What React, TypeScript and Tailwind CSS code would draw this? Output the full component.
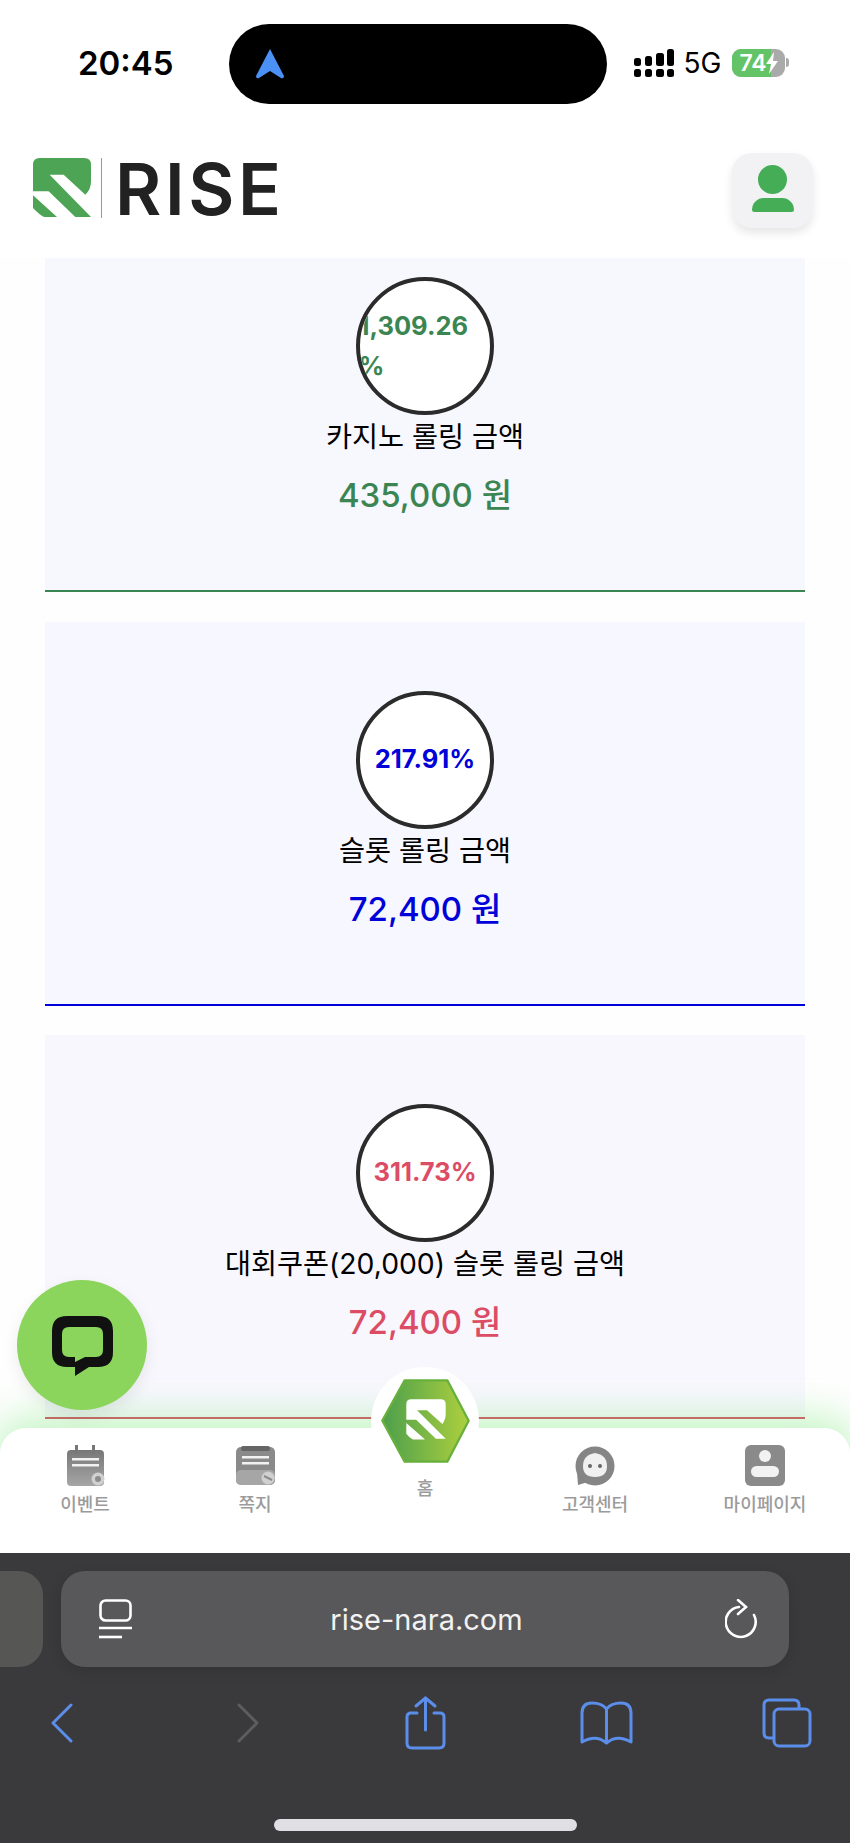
import React from 'react';

const cards = [
  { percent: '1,309.26%', label: '카지노 롤링 금액', amount: '435,000 원', text: 'text-[#3b8552]', line: 'border-[#3b8552]', bg: 'bg-[#f7f7fe]' },
  { percent: '217.91%', label: '슬롯 롤링 금액', amount: '72,400 원', text: 'text-[#0000d8]', line: 'border-[#0000d8]', bg: 'bg-[#f7f7ff]' },
  { percent: '311.73%', label: '대회쿠폰(20,000) 슬롯 롤링 금액', amount: '72,400 원', text: 'text-[#dc4c64]', line: 'border-[#dc4c64]', bg: 'bg-[#f9f7fe]' },
];

const StatusBar = () => (
  <div className="relative flex h-[120px] shrink-0 items-start bg-white">
    <span className="ml-[78px] mt-[43px] text-[33px] font-semibold leading-[40px] text-black">20:45</span>
    <div className="ml-[55px] mt-[24px] flex h-[80px] w-[378px] items-center rounded-[40px] bg-black pl-[27px]">
      <svg width="28" height="30" viewBox="0 0 28 30">
        <path d="M14 0 L28 27 Q28 30 25 29 L14 22 L3 29 Q0 30 0 27 Z" fill="#4a90f5" />
      </svg>
    </div>
    <svg className="ml-[27px] mt-[49px]" width="40" height="28" viewBox="0 0 40 28" fill="#000">
      <rect x="0" y="20" width="7" height="8" rx="2.5" />
      <rect x="11" y="20" width="7" height="8" rx="2.5" />
      <rect x="22" y="20" width="8" height="8" rx="2.5" />
      <rect x="33" y="20" width="7" height="8" rx="2.5" />
      <rect x="0" y="9" width="7" height="8" rx="2.5" />
      <rect x="11" y="7" width="7" height="10" rx="2.5" />
      <rect x="22" y="4" width="8" height="13" rx="2.5" />
      <rect x="33" y="0" width="7" height="17" rx="2.5" />
    </svg>
    <span className="ml-[10px] mt-[47px] text-[28px] font-normal leading-[32px] text-black">5G</span>
    <div className="relative ml-[10px] mt-[49px] flex h-[28px] w-[53px] items-center overflow-hidden rounded-[9px] bg-[#aaaaaa]">
      <div className="flex h-full w-[39px] items-center justify-center bg-[#62c466] pl-[4px] text-[23px] font-semibold leading-none text-white">74</div>
      <svg className="absolute left-[33px] top-[3px]" width="14" height="22" viewBox="0 0 14 22">
        <path d="M9 0 L1 12 H6 L4 22 L13 9 H8 Z" fill="#fff" />
      </svg>
    </div>
    <div className="ml-[1px] mt-[58px] h-[9px] w-[3px] rounded-r-full bg-[#aaaaaa]" />
  </div>
);

const Header = () => (
  <header className="flex h-[138px] shrink-0 items-start justify-between bg-white pl-[33px] pr-[37px]">
    <div className="mt-[38px] flex h-[60px] items-center">
      <svg width="58" height="60" viewBox="38 55 174 180">
        <path d="M38 155 V75 Q38 55 58 55 H192 Q212 55 212 75 V125 Q212 150 195 165 L130 105 H88 L212 232 H165 L85 155 Z" fill="#4ea455" />
        <path d="M38 167 L110 232 H72 Q60 228 38 205 Z" fill="#4ea455" />
      </svg>
      <div className="ml-[10px] h-[60px] w-px bg-[#999999]" />
      <span className="ml-[13px] mt-[2px] text-[71px] font-semibold leading-none tracking-[3.6px] text-[#222222]">RISE</span>
    </div>
    <button type="button" className="mt-[33px] flex h-[75px] w-[81px] flex-col items-center rounded-[20px] bg-[#f2f2f4] pt-[12px] shadow-[0_5px_10px_rgba(0,0,0,0.1)]">
      <span className="h-[29px] w-[29px] rounded-full bg-[#45ad55]" />
      <span className="mt-[4px] h-[14px] w-[42px] rounded-t-[21px] rounded-b-[4px] bg-[#45ad55]" />
    </button>
  </header>
);

const StatCard = ({ card }: { card: (typeof cards)[number] }) => (
  <section className={`flex h-[384px] flex-col items-center border-b-2 pt-[69px] ${card.bg} ${card.line}`}>
    <div className="flex h-[138px] w-[138px] shrink-0 items-center justify-center overflow-hidden rounded-full border-[4px] border-[#2b2b2b] bg-white">
      {card.percent.length > 8 ? (
        <span className={`-ml-[9px] w-[124px] shrink-0 text-left text-[25.5px] font-bold leading-[40px] ${card.text}`}>
          {card.percent.replace('%', '')}
          <br />%
        </span>
      ) : (
        <span className={`-mt-[2px] text-[25.5px] font-bold leading-[40px] ${card.text}`}>{card.percent}</span>
      )}
    </div>
    <p className="mt-[4px] text-[28.3px] leading-[36px] text-black">{card.label}</p>
    <p className={`mt-[20px] text-[33px] font-medium leading-[40px] ${card.text}`}>{card.amount}</p>
  </section>
);

const EventIcon = () => (
  <svg width="39" height="41" viewBox="0 0 39 41">
    <defs>
      <linearGradient id="g1" x1="0" y1="0" x2="0" y2="1">
        <stop offset="0" stopColor="#777777" />
        <stop offset="1" stopColor="#a6a6a6" />
      </linearGradient>
    </defs>
    <rect x="1" y="5" width="37" height="36" rx="4" fill="url(#g1)" />
    <rect x="9" y="0" width="3" height="9" fill="#777" />
    <rect x="26" y="0" width="3" height="9" fill="#777" />
    <rect x="6" y="13" width="27" height="2.5" fill="#f2f2f2" />
    <rect x="6" y="19" width="27" height="2.5" fill="#f2f2f2" />
    <circle cx="32" cy="34" r="6.5" fill="#d0d0d0" />
    <circle cx="32" cy="34" r="3" fill="#8c8c8c" />
  </svg>
);

const NoteIcon = () => (
  <svg width="39" height="39" viewBox="0 0 39 39">
    <rect x="0" y="1" width="39" height="38" rx="5" fill="#8a8a8a" />
    <rect x="0" y="24" width="39" height="15" rx="5" fill="#a6a6a6" />
    <rect x="5" y="0" width="29" height="5" rx="2" fill="#666666" />
    <rect x="6" y="10" width="27" height="2.5" fill="#f2f2f2" />
    <rect x="6" y="16" width="27" height="2.5" fill="#f2f2f2" />
    <circle cx="32" cy="32" r="6.5" fill="#d0d0d0" />
    <path d="M28 30 L36 34" stroke="#8c8c8c" strokeWidth="2" />
  </svg>
);

const SupportIcon = () => (
  <svg width="40" height="40" viewBox="0 0 40 40">
    <circle cx="20" cy="20" r="19.5" fill="#858585" />
    <path d="M2 26 L3 39 L13 36 Z" fill="#858585" />
    <path d="M20 7 Q32 9 32 20 Q32 31 20 31 Q8 31 8 20 Q8 9 20 7 Z" fill="#f0f0f0" />
    <circle cx="15" cy="20" r="2" fill="#666" />
    <circle cx="25" cy="20" r="2" fill="#666" />
  </svg>
);

const MyPageIcon = () => (
  <svg width="40" height="41" viewBox="0 0 40 41">
    <rect x="0" y="0" width="40" height="41" rx="6" fill="#8a8a8a" />
    <circle cx="20" cy="11" r="6" fill="#f2f2f2" />
    <rect x="6" y="21" width="28" height="11" rx="5.5" fill="#f2f2f2" />
  </svg>
);

const HomeLogo = () => (
  <svg width="89" height="84" viewBox="88 88 271 256">
    <defs>
      <linearGradient id="hex" x1="0" y1="0" x2="1" y2="0">
        <stop offset="0" stopColor="#4c9f4c" />
        <stop offset="1" stopColor="#aed03e" />
      </linearGradient>
    </defs>
    <path d="M92 215 L160 92 H290 L355 215 L290 340 H160 Z" fill="url(#hex)" stroke="#67b03c" strokeWidth="7" strokeLinejoin="round" />
    <path d="M165 212 V165 Q165 150 180 150 H270 Q285 150 285 165 V195 Q285 212 275 225 L228 183 H198 L285 270 H255 L195 212 Z" fill="#fff" />
    <path d="M165 222 L222 272 H185 Q172 265 165 255 Z" fill="#fff" />
  </svg>
);

const navItems = [
  { label: '이벤트', icon: <EventIcon /> },
  { label: '쪽지', icon: <NoteIcon /> },
  { label: '홈', icon: null },
  { label: '고객센터', icon: <SupportIcon /> },
  { label: '마이페이지', icon: <MyPageIcon /> },
];

const BottomNav = () => (
  <nav className="absolute inset-x-0 bottom-0 grid h-[125px] grid-cols-5 rounded-t-[26px] bg-white shadow-[0_-6px_40px_4px_rgba(110,230,110,0.42)]">
    {navItems.map((item) =>
      item.icon ? (
        <div key={item.label} className="flex flex-col items-center pt-[17px]">
          <div className="flex h-[41px] items-center justify-center blur-[0.6px]">{item.icon}</div>
          <span className="mt-[7px] text-[18px] font-medium leading-[24px] text-[#9b9b9b]">{item.label}</span>
        </div>
      ) : (
        <div key={item.label} className="relative flex flex-col items-center pt-[49px]">
          <div className="absolute -top-[61px] left-1/2 flex h-[108px] w-[108px] -translate-x-1/2 items-center justify-center rounded-full bg-white">
            <HomeLogo />
          </div>
          <span className="text-[18px] font-medium leading-[24px] text-[#9b9b9b]">{item.label}</span>
        </div>
      ),
    )}
  </nav>
);

const ChatButton = () => (
  <button type="button" className="absolute bottom-[143px] left-[17px] h-[130px] w-[130px] rounded-full bg-[#8bd55c] shadow-[0_6px_16px_rgba(0,0,0,0.08)]">
    <svg width="130" height="130" viewBox="0 0 130 130">
      <path fillRule="evenodd" fill="#111" d="M50 36 H81 Q96 36 96 51 V72 Q96 87 81 87 H72 L58 96 V87 H50 Q35 87 35 72 V51 Q35 36 50 36 Z M52 47 Q45 47 45 54 V70 Q45 77 52 77 H58 V82 L68 77 H79 Q86 77 86 70 V54 Q86 47 79 47 Z" />
    </svg>
  </button>
);

const BrowserChrome = () => (
  <div className="flex h-[290px] shrink-0 flex-col bg-[#3a3a3c]">
    <div className="mt-[18px] flex h-[96px] items-stretch gap-[18px]">
      <div className="w-[43px] rounded-r-[24px] bg-[#565654]" />
      <div className="flex w-[728px] items-center justify-between rounded-[24px] bg-[#58585a] pl-[38px] pr-[30px] shadow-[0_4px_14px_rgba(0,0,0,0.12)]">
        <svg width="33" height="40" viewBox="0 0 33 40" fill="none" stroke="#fff" strokeWidth="2.6">
          <rect x="1.5" y="1.5" width="30" height="20" rx="5" />
          <path d="M0 29 H33" />
          <path d="M0 38 H23" />
        </svg>
        <span className="mr-[4px] text-[29px] leading-none text-[#f2f2f2]">rise-nara.com</span>
        <svg width="34" height="40" viewBox="0 0 34 40" fill="none" stroke="#fff" strokeWidth="2.6" strokeLinecap="round">
          <path d="M14 8 A15 15 0 1 0 29 16" />
          <path d="M13 1 L21 8 L13 15" />
        </svg>
      </div>
    </div>
    <div className="relative mt-[28px] h-[56px]">
      <div className="flex h-full items-center">
        <svg className="ml-[50px]" width="24" height="40" viewBox="0 0 24 40" fill="none" stroke="#5b8dea" strokeWidth="3" strokeLinecap="round" strokeLinejoin="round">
          <path d="M21 2 L3 20 L21 38" />
        </svg>
        <svg className="ml-[162px]" width="24" height="40" viewBox="0 0 24 40" fill="none" stroke="#5d5d60" strokeWidth="3" strokeLinecap="round" strokeLinejoin="round">
          <path d="M3 2 L21 20 L3 38" />
        </svg>
        <svg className="ml-[145px]" width="41" height="54" viewBox="0 0 41 54" fill="none" stroke="#5b8dea" strokeWidth="3" strokeLinecap="round" strokeLinejoin="round">
          <path d="M12 17 H6 Q2 17 2 21 V47 Q2 52 7 52 H34 Q39 52 39 47 V21 Q39 17 35 17 H29" />
          <path d="M20.5 34 V2" />
          <path d="M11 10 L20.5 2 L30 10" />
        </svg>
        <svg className="ml-[134px]" width="53" height="44" viewBox="0 0 53 44" fill="none" stroke="#5b8dea" strokeWidth="3" strokeLinejoin="round">
          <path d="M26.5 8 Q22 2 12 2 Q2 2 2 12 V41 Q16 33 26.5 42 Q37 33 51 41 V12 Q51 2 41 2 Q31 2 26.5 8 Z" />
          <path d="M26.5 8 V42" />
        </svg>
        <svg className="ml-[129px]" width="50" height="50" viewBox="0 0 50 50" fill="none" stroke="#5b8dea" strokeWidth="3" strokeLinejoin="round">
          <path d="M12 40 H7 Q2 40 2 35 V7 Q2 2 7 2 H32 Q37 2 37 7 V11" />
          <rect x="12" y="11" width="36" height="37" rx="5" />
        </svg>
      </div>
    </div>
    <div className="mx-auto mt-[68px] h-[12px] w-[303px] rounded-full bg-[#e0e0e4]" />
  </div>
);

export default function App() {
  return (
    <div className="flex h-[1843px] w-[850px] flex-col overflow-hidden bg-white font-['Inter','Noto_Sans_CJK_KR',sans-serif]">
      <StatusBar />
      <Header />
      <main className="relative flex-1 overflow-hidden bg-[#fefefe]">
        <div className="-mt-[50px] flex flex-col gap-[29.5px] px-[45px]">
          {cards.map((card) => (
            <StatCard key={card.label} card={card} />
          ))}
        </div>
        <BottomNav />
        <ChatButton />
      </main>
      <BrowserChrome />
    </div>
  );
}
